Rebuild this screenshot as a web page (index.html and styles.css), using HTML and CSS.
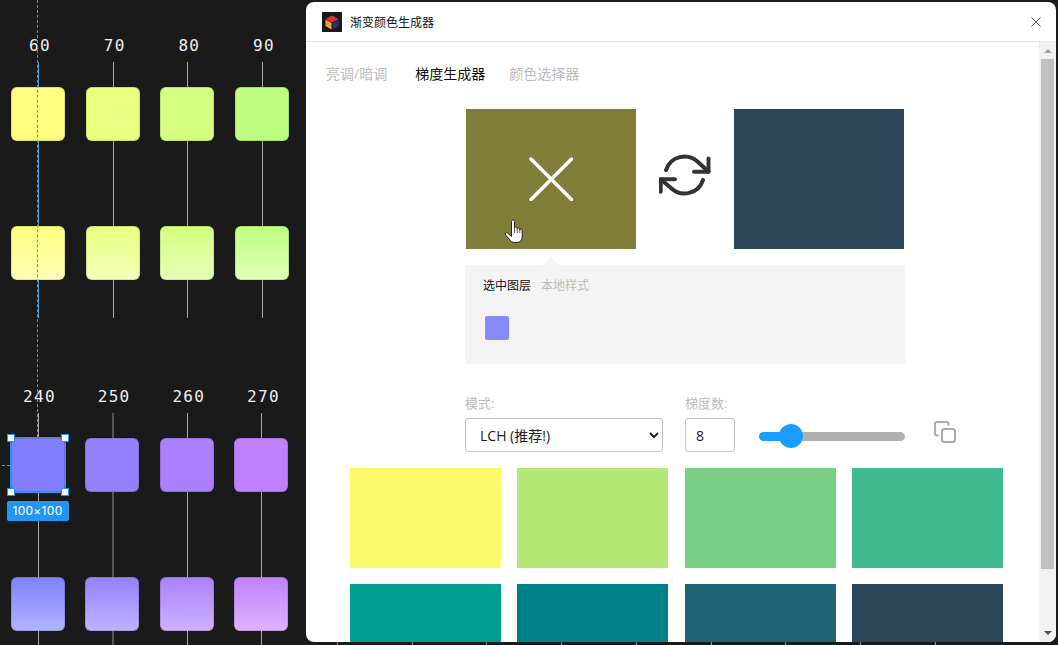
FILE: index.html
```html
<!DOCTYPE html>
<html lang="zh-CN">
	<head>
		<meta charset="UTF-8" />
		<meta name="viewport" content="width=device-width, initial-scale=1.0" />
		<title>渐变颜色生成器</title>
		<link rel="stylesheet" href="styles.css">
	</head>
	<body>
		<!-- canvas behind the plugin window -->
		<div class="canvas">
			<div class="board board-top">
				<div class="col col-selected-guide">
					<div class="label">60</div>
					<div class="chip y60"></div>
					<div class="chip y60-fade"></div>
				</div>
				<div class="col">
					<div class="label">70</div>
					<div class="chip y70"></div>
					<div class="chip y70-fade"></div>
				</div>
				<div class="col">
					<div class="label">80</div>
					<div class="chip y80"></div>
					<div class="chip y80-fade"></div>
				</div>
				<div class="col">
					<div class="label">90</div>
					<div class="chip y90"></div>
					<div class="chip y90-fade"></div>
				</div>
			</div>
			<div class="board board-bottom">
				<div class="col">
					<div class="label">240</div>
					<div class="chip p240">
						<div class="selection">
							<span class="handle handle-tl"></span>
							<span class="handle handle-tr"></span>
							<span class="handle handle-bl"></span>
							<span class="handle handle-br"></span>
							<span class="size-badge">100×100</span>
						</div>
					</div>
					<div class="chip p240-fade"></div>
				</div>
				<div class="col col-thick">
					<div class="label">250</div>
					<div class="chip p250"></div>
					<div class="chip p250-fade"></div>
				</div>
				<div class="col">
					<div class="label">260</div>
					<div class="chip p260"></div>
					<div class="chip p260-fade"></div>
				</div>
				<div class="col">
					<div class="label">270</div>
					<div class="chip p270"></div>
					<div class="chip p270-fade"></div>
				</div>
			</div>
			<div class="guide-v"></div>
			<div class="guide-h"></div>
			<div class="ticks"></div>
		</div>

		<div class="window">
			<div class="window-header">
				<svg class="logo" viewBox="0 0 20 20" width="20" height="20">
					<rect width="20" height="20" fill="#1a1a1a" />
					<path d="M10 3.5 16.5 7 10 10.5 3.5 7z" fill="#d8352a" />
					<path d="M3.5 7.5 9.5 11v6.5L3.5 14z" fill="#f0a032" />
					<path d="M16.5 7.5 10.5 11v6.5l6-3.500z" fill="#27307c" />
				</svg>
				<div class="window-title">渐变颜色生成器</div>
				<svg class="close-icon" viewBox="0 0 10 10" width="10" height="10">
					<path d="M.5.5l9 9M9.500.5l-9 9" stroke="#555" stroke-width="1" fill="none" />
				</svg>
			</div>
			<div class="window-body">
				<div class="content">
					<div class="tabs">
						<div class="tab tab-first">亮调/暗调</div>
						<div class="tab tab-active">梯度生成器</div>
						<div class="tab">颜色选择器</div>
					</div>

					<div class="pickers">
						<div class="picker picker-from">
							<svg class="picker-x" viewBox="0 0 44 44" width="44" height="44">
								<path d="M2 2l40.500 40.500M42.500 2 2 42.500" stroke="#fff" stroke-width="3.500" stroke-linecap="round" fill="none" />
							</svg>
							<svg class="hand-cursor" viewBox="0 0 20 26" width="20" height="26">
								<path d="M7.500 3.500c0-2 3-2 3 0V10c0-1.600 2.700-1.600 2.700 0v1c0-1.500 2.600-1.500 2.600 0v1c0-1.400 2.400-1.400 2.400 0v6.500c0 3.500-2 6-5.500 6h-2c-2.500 0-3.800-1.200-5-3L1.500 17c-1-1.600.9-3 2.200-1.800l3.800 3.300z" fill="#fff" stroke="#222" stroke-width="1" stroke-linejoin="round" />
								<path d="M10.500 10v5M13.200 11v4M15.800 12v3" stroke="#222" stroke-width=".8" fill="none" />
							</svg>
						</div>
						<div class="swap">
							<svg viewBox="0 0 52 44" width="52" height="44">
								<g stroke="#333" stroke-width="4" stroke-linecap="round" stroke-linejoin="round" fill="none">
									<path d="M7 17A19.500 19.500 0 0 1 39 9L49.500 18.700" />
									<path d="M49.500 5.500V18.700H35" />
									<path d="M44 27A19.500 19.500 0 0 1 12 35L1.700 26.300" />
									<path d="M1.700 38.700V26.300H16" />
								</g>
							</svg>
						</div>
						<div class="picker picker-to"></div>
					</div>

					<div class="layer-panel">
						<div class="layer-tabs">
							<div class="layer-tab layer-tab-active">选中图层</div>
							<div class="layer-tab">本地样式</div>
						</div>
						<div class="layer-swatch"></div>
					</div>

					<div class="controls">
						<div class="field">
							<label class="field-label">模式:</label>
							<select class="mode-select">
								<option>LCH (推荐!)</option>
							</select>
						</div>
						<div class="field">
							<label class="field-label">梯度数:</label>
							<input class="steps-input" type="text" value="8" />
						</div>
						<input class="steps-slider" type="range" min="2" max="38" value="8" />
						<svg class="copy-icon" viewBox="0 0 22 22" width="22" height="22">
							<g stroke="#aaa" stroke-width="2" fill="none">
								<rect x="8" y="8" width="13" height="13" rx="2.500" />
								<path d="M4.500 14.500H3a2 2 0 0 1-2-2V3a2 2 0 0 1 2-2h9.500a2 2 0 0 1 2 2v1.500" />
							</g>
						</svg>
					</div>

					<div class="palette">
						<div class="shade s1"></div>
						<div class="shade s2"></div>
						<div class="shade s3"></div>
						<div class="shade s4"></div>
						<div class="shade s5"></div>
						<div class="shade s6"></div>
						<div class="shade s7"></div>
						<div class="shade s8"></div>
					</div>
				</div>
				<div class="scrollbar">
					<div class="arrow-up"></div>
					<div class="scroll-thumb"></div>
					<div class="arrow-down"></div>
				</div>
			</div>
		</div>
	</body>
</html>
```

FILE: styles.css
```css
* {
	padding: 0;
	margin: 0;
	box-sizing: border-box;
}
body {
	position: relative;
	display: flex;
	justify-content: flex-end;
	width: 1058px;
	height: 645px;
	padding: 2px 2px 3px 0;
	overflow: hidden;
	background-color: #1a1a1a;
	font-family: "Open Sans", "Noto Sans CJK SC", sans-serif;
}

/* canvas */
.canvas {
	position: absolute;
	top: 0;
	left: 0;
	width: 100%;
	height: 100%;
}
.board {
	position: absolute;
	display: grid;
	grid-template-columns: repeat(4, 54px);
	column-gap: 20.67px;
}
.board-top {
	top: 38px;
	left: 11px;
}
.board-bottom {
	top: 389px;
	left: 10.500px;
}
.col {
	position: relative;
	display: flex;
	flex-direction: column;
	align-items: center;
}
.col::before {
	content: "";
	position: absolute;
	top: 24px;
	left: 27px;
	width: 1px;
	height: 256px;
	background-color: #a8a8a8;
}
.col-selected-guide::before {
	background-color: #4a9be0;
}
.col-thick::before {
	width: 2px;
	background-color: #555;
}
.label {
	height: 16px;
	margin-bottom: 8px;
	padding-left: 4px;
	font-family: "DejaVu Sans Mono", monospace;
	font-size: 16px;
	line-height: 16px;
	letter-spacing: 1.300px;
	color: #eee;
}
.chip {
	position: relative;
	width: 54px;
	height: 54px;
	margin-top: 25px;
	border-radius: 6px;
	box-shadow: inset 0 0 0 1px rgba(0, 0, 0, 0.12);
}
.chip + .chip {
	margin-top: 85px;
}
.y60 { background: #ffff80; }
.y70 { background: #e9ff80; }
.y80 { background: #d4ff80; }
.y90 { background: #bfff80; }
.y60-fade { background: linear-gradient(#ffff80, #ffffb8); }
.y70-fade { background: linear-gradient(#e9ff80, #f2ffb8); }
.y80-fade { background: linear-gradient(#d4ff80, #e8ffb8); }
.y90-fade { background: linear-gradient(#bfff80, #dfffb8); }
.p240 { background: #8080ff; }
.p250 { background: #9580ff; }
.p260 { background: #aa80ff; }
.p270 { background: #bf80ff; }
.p240-fade { background: linear-gradient(#8080ff, #b3b3ff); }
.p250-fade { background: linear-gradient(#9580ff, #bfb3ff); }
.p260-fade { background: linear-gradient(#aa80ff, #ccb3ff); }
.p270-fade { background: linear-gradient(#bf80ff, #dfb3ff); }
.selection {
	position: absolute;
	top: -1px;
	left: -1px;
	right: -1px;
	bottom: -1px;
	border: 1px solid #2196f3;
}
.handle {
	position: absolute;
	width: 8px;
	height: 8px;
	background-color: #fff;
	border: 1px solid #2196f3;
}
.handle-tl { top: -4px; left: -4px; }
.handle-tr { top: -4px; right: -4px; }
.handle-bl { bottom: -4px; left: -4px; }
.handle-br { bottom: -4px; right: -4px; }
.size-badge {
	position: absolute;
	top: 63px;
	left: -4px;
	width: 62px;
	height: 20px;
	border-radius: 2px;
	background-color: #2196f3;
	color: #fff;
	font-family: Inter, sans-serif;
	font-size: 12px;
	line-height: 20px;
	letter-spacing: 0.300px;
	text-align: center;
}
.guide-v {
	position: absolute;
	top: 0;
	left: 37px;
	height: 437px;
	border-left: 1px dashed #3b9cf0;
}
.guide-h {
	position: absolute;
	top: 465px;
	left: 2px;
	width: 8px;
	border-top: 1px dashed #3b9cf0;
}
.ticks {
	position: absolute;
	bottom: 0;
	left: 337px;
	width: 599px;
	height: 3px;
	background: repeating-linear-gradient(to right, #999 0, #999 1px, transparent 1px, transparent 74.700px);
}

/* plugin window */
.window {
	position: relative;
	display: flex;
	flex-direction: column;
	width: 750px;
	height: 640px;
	border-radius: 8px;
	overflow: hidden;
	background-color: #fff;
}
.window-header {
	display: flex;
	align-items: center;
	flex-shrink: 0;
	height: 40px;
	padding-left: 16px;
	padding-right: 15px;
	border-bottom: 1px solid #e8e8e8;
}
.logo {
	margin-right: 8px;
}
.window-title {
	flex: 1;
	font-size: 12px;
	color: #111;
}
.window-body {
	flex: 1;
	display: flex;
	min-height: 0;
}
.content {
	flex: 1;
	min-width: 0;
	overflow: hidden;
}
.tabs {
	display: flex;
	column-gap: 24px;
	padding-top: 22px;
	padding-left: 20px;
}
.tab {
	font-size: 14px;
	line-height: 20px;
	color: #bbb;
}
.tab-first {
	margin-right: 4px;
}
.tab-active {
	color: #111;
}
.pickers {
	display: flex;
	margin-top: 25px;
	margin-left: 160px;
}
.picker {
	width: 170px;
	height: 140px;
}
.picker-from {
	position: relative;
	display: flex;
	align-items: center;
	justify-content: center;
	background-color: #7f7d38;
}
.picker-to {
	background-color: #2c4759;
}
.hand-cursor {
	position: absolute;
	top: 109px;
	left: 38px;
}
.swap {
	display: flex;
	align-items: center;
	justify-content: center;
	width: 98px;
	height: 132px;
}
.layer-panel {
	position: relative;
	width: 440px;
	height: 99px;
	margin-top: 16px;
	margin-left: 159px;
	padding: 13px 20px 0 18px;
	background-color: #f4f4f4;
}
.layer-panel::before {
	content: "";
	position: absolute;
	top: -8px;
	left: 78px;
	border-left: 8px solid transparent;
	border-right: 8px solid transparent;
	border-bottom: 8px solid #f4f4f4;
}
.layer-tabs {
	display: flex;
	column-gap: 10px;
}
.layer-tab {
	font-size: 12px;
	line-height: 16px;
	color: #bbb;
}
.layer-tab-active {
	color: #111;
}
.layer-swatch {
	width: 24px;
	height: 24px;
	margin-top: 22px;
	margin-left: 2px;
	border-radius: 2px;
	background-color: #8888ff;
}
.controls {
	display: flex;
	align-items: flex-end;
	margin-top: 30px;
	margin-left: 159px;
}
.field {
	display: flex;
	flex-direction: column;
	row-gap: 6px;
	margin-right: 22px;
}
.field-label {
	font-size: 13px;
	line-height: 18px;
	color: #bbb;
}
.mode-select {
	width: 198px;
	height: 34px;
	padding-left: 10px;
	border: 1px solid #c4c4c4;
	border-radius: 3px;
	background-color: #fff;
	font-family: inherit;
	font-size: 14px;
	color: #222;
}
.steps-input {
	width: 50px;
	height: 34px;
	padding-left: 10px;
	border: 1px solid #c4c4c4;
	border-radius: 3px;
	font-family: inherit;
	font-size: 14px;
	color: #222;
}
.steps-slider {
	-webkit-appearance: none;
	appearance: none;
	width: 146px;
	height: 24px;
	margin-left: 2px;
	margin-bottom: 4px;
	background: transparent;
}
.steps-slider::-webkit-slider-runnable-track {
	height: 9px;
	border-radius: 5px;
	background: linear-gradient(to right, #1a9dff 32px, #b0b0b0 32px);
}
.steps-slider::-webkit-slider-thumb {
	-webkit-appearance: none;
	width: 24px;
	height: 24px;
	margin-top: -7.500px;
	border-radius: 50%;
	background-color: #1a9dff;
}
.copy-icon {
	margin-left: 29px;
	margin-bottom: 9px;
}
.palette {
	display: grid;
	grid-template-columns: repeat(4, 151px);
	grid-auto-rows: 100px;
	column-gap: 16.330px;
	row-gap: 16px;
	margin-top: 16px;
	margin-left: 44px;
}
.s1 { background-color: #f9f96a; }
.s2 { background-color: #b6e878; }
.s3 { background-color: #78d084; }
.s4 { background-color: #3fb98d; }
.s5 { background-color: #009e90; }
.s6 { background-color: #008089; }
.s7 { background-color: #1d6374; }
.s8 { background-color: #2c4759; }

/* scrollbar is just drawn, nothing scrolls here */
.scrollbar {
	display: flex;
	flex-direction: column;
	align-items: center;
	flex-shrink: 0;
	width: 17px;
	background-color: #f1f1f1;
}
.arrow-up {
	margin-top: 7px;
	border-left: 4px solid transparent;
	border-right: 4px solid transparent;
	border-bottom: 4px solid #a3a3a3;
}
.scroll-thumb {
	width: 13px;
	height: 510px;
	margin-top: 6px;
	background-color: #c1c1c1;
}
.arrow-down {
	margin-top: 62px;
	border-left: 4px solid transparent;
	border-right: 4px solid transparent;
	border-top: 4px solid #505050;
}
```
